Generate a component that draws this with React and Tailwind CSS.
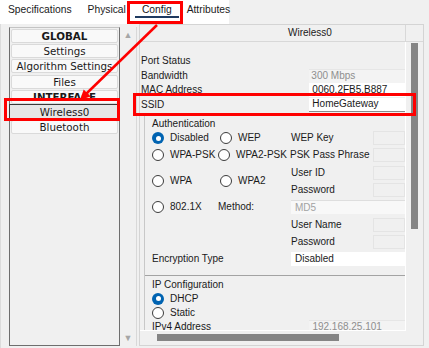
import React from 'react';

const Radio = ({ on }) =>
  on ? (
    <span className="w-[12px] h-[12px] rounded-full bg-[#0063b1] flex items-center justify-center shrink-0">
      <span className="w-[5px] h-[5px] rounded-full bg-white" />
    </span>
  ) : (
    <span className="w-[12px] h-[12px] rounded-full border border-[#3c3c3c] bg-white shrink-0" />
  );

const RadioLabel = ({ on, label, className = '' }) => (
  <div className={`flex items-center gap-[6px] ${className}`}>
    <Radio on={on} />
    <span>{label}</span>
  </div>
);

const SmallField = ({ className = '' }) => (
  <div className={`h-[14px] border border-[#e4e4e4] bg-[#f0f0f0] ${className}`} />
);

const listItems = [
  { label: 'GLOBAL', bold: true },
  { label: 'Settings' },
  { label: 'Algorithm Settings' },
  { label: 'Files' },
  { label: 'INTERFACE', bold: true },
  { label: 'Wireless0', selected: true },
  { label: 'Bluetooth' },
];

const App = () => {
  return (
    <div className="relative w-[429px] h-[348px] overflow-hidden bg-[#f0f0f0] font-['Liberation_Sans',Arial,sans-serif] text-[10px] leading-[12px] text-[#1a1a1a]">
      {/* tabs */}
      <div className="flex h-[24px]">
        <div className="w-[229px] bg-white flex items-start pt-[4px] text-[10.3px]">
          <span className="ml-[8px]">Specifications</span>
          <span className="ml-[16px]">Physical</span>
          <span className="ml-[16px] relative">
            Config
            <span className="absolute left-[-7px] right-[-7px] top-[12px] h-[2px] bg-[#1f3a60]" />
          </span>
          <span className="ml-[15px]">Attributes</span>
        </div>
      </div>

      <div className="flex h-[324px]">
        {/* left list */}
        <div className="w-[137px] flex pl-[8px] pt-[3px] pb-[2px] border-l border-[#dcdcdc]">
          <div className="w-[111px] h-full border border-[#6e6e6e] border-t-[#c4c4c4] flex flex-col gap-[1.2px] pt-[1px] px-[1px] font-['DejaVu_Sans',sans-serif] text-[10.3px]">
            {listItems.map((it) => (
              <div
                key={it.label}
                className={
                  it.selected
                    ? 'h-[16px] -my-[1px] -mx-[2px] border border-[#3a3a3a] bg-[#e6e6e6] flex items-center justify-center'
                    : 'h-[14px] rounded-[2px] border border-[#dadada] bg-[#f9f9f9] flex items-center justify-center'
                }
              >
                <span className={it.bold ? 'font-bold' : ''}>{it.label}</span>
              </div>
            ))}
          </div>
          <div className="w-[17px] h-full flex flex-col items-center justify-between pt-[2px] pb-[2px] text-[9px] text-[#a6a6a6] border-r border-[#d8d8d8]">
            <span>▲</span>
            <span>▼</span>
          </div>
        </div>

        {/* right pane */}
        <div className="ml-[2px] w-[285px] h-[322px] border border-[#d4d4d4] flex flex-col">
          <div className="flex h-[17px] shrink-0">
            <div className="w-[266px] border-b border-r border-[#d8d8d8] flex items-center pl-[148px]">
              Wireless0
            </div>
            <div className="flex-1 border-b border-[#d8d8d8]" />
          </div>

          <div className="flex flex-1">
            <div className="w-[266px] flex flex-col">
              <div className="h-[289px] overflow-hidden border-r border-b border-white pt-[12px]">
                <div className="h-[14.5px] flex items-center pl-[1px]">Port Status</div>
                <div className="h-[14.5px] flex items-center">
                  <span className="w-[170px] pl-[1px]">Bandwidth</span>
                  <div className="w-[96px] h-[14px] bg-[#f3f3f3] border-t border-[#e6e6e6] pl-[2px] flex items-center text-[#8e8e8e]">
                    300 Mbps
                  </div>
                </div>
                <div className="h-[14.5px] flex items-center">
                  <span className="w-[170px] pl-[1px]">MAC Address</span>
                  <div className="w-[96px] h-[14px] bg-white pl-[3px] flex items-center">0060.2FB5.B887</div>
                </div>
                <div className="h-[14.5px] flex items-center">
                  <span className="w-[170px] pl-[1px]">SSID</span>
                  <div className="w-[96px] h-[14px] bg-white border-b border-[#8a8a8a] pl-[3px] flex items-center">
                    HomeGateway
                  </div>
                </div>

                <div className="ml-[4px] mt-[1.5px] border-l border-[#c8c8c8]">
                  <div className="h-[162px] border-b border-[#a3a3a3] pl-[7px]">
                    <div className="pt-[4px]">Authentication</div>
                    <div className="grid grid-cols-[68px_71px_82px_32px] grid-rows-[repeat(8,17.3px)] items-center">
                      <RadioLabel on label="Disabled" />
                      <RadioLabel label="WEP" />
                      <span>WEP Key</span>
                      <SmallField />

                      <RadioLabel label="WPA-PSK" />
                      <RadioLabel label="WPA2-PSK" className="-ml-[2px]" />
                      <span className="-ml-[1px] whitespace-nowrap">PSK Pass Phrase</span>
                      <SmallField />

                      <RadioLabel label="WPA" className="row-span-2" />
                      <RadioLabel label="WPA2" className="row-span-2" />
                      <span>User ID</span>
                      <SmallField />
                      <span className="col-start-3">Password</span>
                      <SmallField />

                      <RadioLabel label="802.1X" />
                      <span className="-ml-[2px]">Method:</span>
                      <div className="col-span-2 h-[14px] bg-[#f8f8f8] border-t border-[#dedede] pl-[4px] flex items-center text-[#a2a2a2]">
                        MD5
                      </div>

                      <span className="col-start-3">User Name</span>
                      <SmallField />
                      <span className="col-start-3">Password</span>
                      <SmallField />

                      <span className="col-span-2">Encryption Type</span>
                      <div className="col-span-2 h-[14px] bg-white pl-[4px] flex items-center">Disabled</div>
                    </div>
                  </div>

                  <div className="pl-[7px] pt-[2px]">
                    <div className="h-[14px] flex items-center">IP Configuration</div>
                    <RadioLabel on label="DHCP" className="h-[14px]" />
                    <RadioLabel label="Static" className="h-[14px]" />
                    <div className="h-[14px] flex items-center">
                      <span className="w-[158px]">IPv4 Address</span>
                      <div className="w-[96px] h-[14px] bg-[#f3f3f3] border-t border-[#e6e6e6] pl-[3px] flex items-center text-[#8e8e8e]">
                        192.168.25.101
                      </div>
                    </div>
                  </div>
                </div>
              </div>
              <div className="flex-1 pt-[3px] pl-[17px]">
                <div className="w-[182px] h-[7px] bg-[#858585]" />
              </div>
            </div>

            <div className="flex-1 pt-[1px] pl-[5px]">
              <div className="w-[7px] h-[186px] bg-[#858585]" />
            </div>
          </div>
        </div>
      </div>

      {/* annotation overlay */}
      <div className="absolute left-[127px] top-[1px] w-[56px] h-[23px] border-[3px] border-[#ff0000]" />
      <div className="absolute left-[4px] top-[98px] w-[116px] h-[23px] border-[3px] border-[#ff0000]" />
      <div className="absolute left-[133px] top-[93px] w-[283px] h-[23px] border-[3px] border-[#ff0000]" />
      <svg className="absolute inset-0 pointer-events-none" width="429" height="348">
        <line x1="157" y1="25" x2="86" y2="94" stroke="#ff0000" strokeWidth="2.5" />
        <polygon points="80,100 90.7,96.6 83.7,89.4" fill="#ff0000" />
      </svg>
    </div>
  );
};

export default App;
